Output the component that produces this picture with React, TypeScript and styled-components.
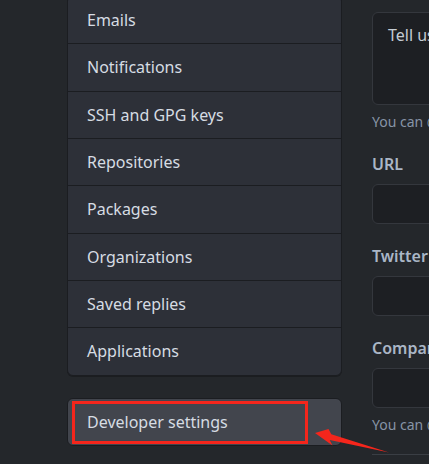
import React from "react";
import styled, { createGlobalStyle } from "styled-components";

const Global = createGlobalStyle`
  html, body { margin: 0; padding: 0; background: #24272b; overflow: hidden; }
  body { font-family: "Noto Sans", "Open Sans", "Liberation Sans", sans-serif; }
`;

const Page = styled.div`
  display: flex;
  gap: 30px;
  padding-left: 67px;
  margin-top: -5px;
  width: 900px;
`;

const Sidebar = styled.aside`
  width: 275px;
  flex: none;
  display: flex;
  flex-direction: column;
  gap: 22px;
`;

const Menu = styled.nav`
  background: #2d3038;
  border: 1px solid #1b1d21;
  border-radius: 6px;
  overflow: hidden;
  box-shadow: 0 1px 0 rgba(0, 0, 0, 0.25);
`;

const MenuItem = styled.div`
  box-sizing: border-box;
  height: 47.33px;
  display: flex;
  align-items: center;
  padding-left: 19px;
  font-size: 16px;
  color: #d6dce3;
  border-top: 1px solid #1b1d21;
  &:first-child { border-top: none; }
`;

const DevBox = styled.div`
  position: relative;
  box-sizing: border-box;
  height: 48px;
  display: flex;
  align-items: center;
  padding-left: 19px;
  font-size: 16px;
  color: #d6dce3;
  background: #42454d;
  border: 1px solid #1b1d21;
  border-radius: 6px;
`;

const Highlight = styled.div`
  position: absolute;
  left: 4px;
  top: 2px;
  width: 236px;
  height: 43px;
  box-sizing: border-box;
  border: 3px solid #f5261c;
  pointer-events: none;
`;

const Arrow = styled.svg`
  position: absolute;
  left: 244px;
  top: 19px;
  overflow: visible;
`;

const Main = styled.main`
  width: 500px;
  flex: none;
  padding-top: 17px;
  display: flex;
  flex-direction: column;
`;

const TextArea = styled.textarea`
  box-sizing: border-box;
  height: 93px;
  width: 100%;
  resize: none;
  background: #1d1f23;
  border: 1px solid #34373d;
  border-radius: 6px;
  padding: 10px 15px;
  font-family: inherit;
  font-size: 16px;
  line-height: 24px;
  color: #c9d1d9;
  outline: none;
  &::placeholder { color: #c5ccd4; opacity: 1; }
`;

const Help = styled.p`
  margin: 6px 0 0;
  font-size: 14px;
  line-height: 21px;
  color: #8794a6;
`;

const Group = styled.div`
  margin-top: 20px;
  display: flex;
  flex-direction: column;
`;

const Label = styled.label`
  font-size: 16px;
  font-weight: 600;
  line-height: 24px;
  color: #aab6c6;
  margin-bottom: 8px;
`;

const Input = styled.input`
  box-sizing: border-box;
  height: 40px;
  width: 100%;
  background: #1d1f23;
  border: 1px solid #34373d;
  border-radius: 6px;
  outline: none;
  padding: 0 15px;
  font-family: inherit;
  font-size: 16px;
  color: #c9d1d9;
`;

const Divider = styled.hr`
  margin: 19px 0 0;
  border: none;
  border-top: 1px solid #3a3e44;
`;

const items = [
  "Emails",
  "Notifications",
  "SSH and GPG keys",
  "Repositories",
  "Packages",
  "Organizations",
  "Saved replies",
  "Applications",
];

export default function App() {
  return (
    <>
      <Global />
      <Page>
        <Sidebar>
          <Menu>
            {items.map((t) => (
              <MenuItem key={t}>{t}</MenuItem>
            ))}
          </Menu>
          <DevBox>
            Developer settings
            <Highlight />
            <Arrow width="80" height="38" viewBox="0 0 80 38">
              <polygon
                points="3,15 16.5,11 19.3,16.3 77,34.5 17.7,22 20.5,27.5"
                fill="#f5261c"
              />
            </Arrow>
          </DevBox>
        </Sidebar>
        <Main>
          <TextArea readOnly placeholder="Tell us a little bit about yourself" />
          <Help>You can @mention other users and organizations to link to them.</Help>
          <Group>
            <Label>URL</Label>
            <Input readOnly />
          </Group>
          <Group>
            <Label>Twitter username</Label>
            <Input readOnly />
          </Group>
          <Group>
            <Label>Company</Label>
            <Input readOnly />
            <Help>You can @mention your company's GitHub organization to link it.</Help>
          </Group>
          <Divider />
        </Main>
      </Page>
    </>
  );
}
